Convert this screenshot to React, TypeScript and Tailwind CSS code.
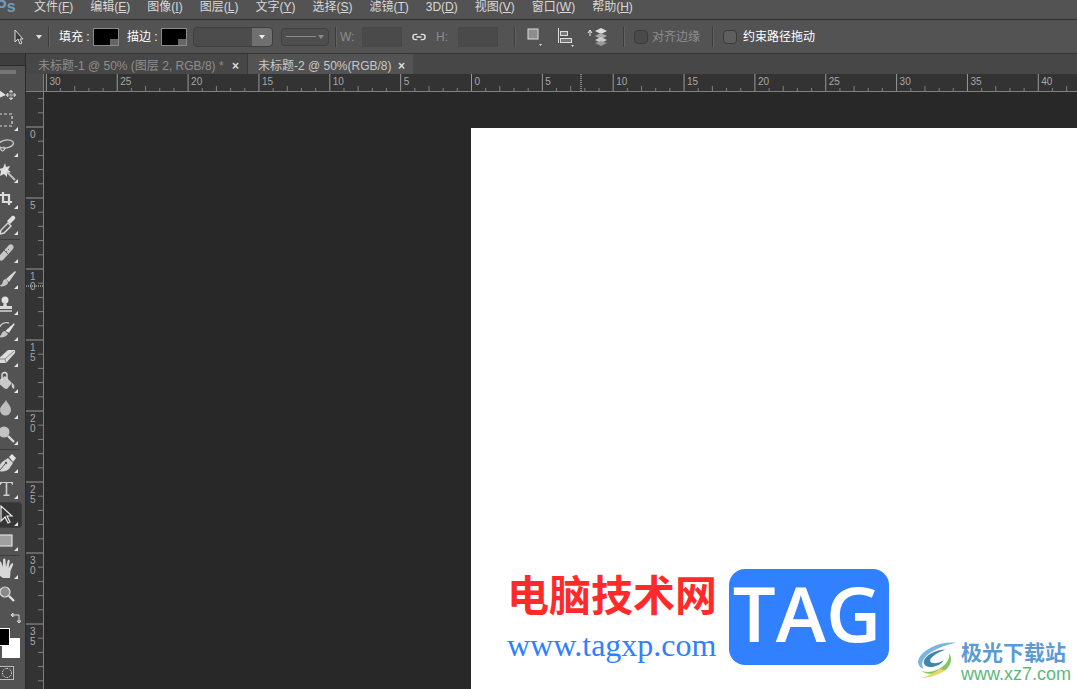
import { ReactNode } from "react";

const menus = [
  ["文件(", "F", ")"],
  ["编辑(", "E", ")"],
  ["图像(", "I", ")"],
  ["图层(", "L", ")"],
  ["文字(", "Y", ")"],
  ["选择(", "S", ")"],
  ["滤镜(", "T", ")"],
  ["3D(", "D", ")"],
  ["视图(", "V", ")"],
  ["窗口(", "W", ")"],
  ["帮助(", "H", ")"],
];

// tool icons, drawn on a 26x26 box and cut off at the left like the screenshot
const tools: { icon: ReactNode; fly?: boolean; active?: boolean }[][] = [
  [
    {
      icon: (
        <>
          <path d="M-1 8l7 5-7 3z" fill="#e0e0e0" />
          <path d="M11 9v8M7 13h8M11 8l-2 2h4zM11 18l-2-2h4zM6 13l2-2v4zM16 13l-2-2v4z" stroke="#c8c8c8" fill="#c8c8c8" strokeWidth="0.7" />
        </>
      ),
    },
    { icon: <rect x="-1" y="6" width="13" height="12" fill="none" stroke="#d8d8d8" strokeWidth="1.2" strokeDasharray="3 2" />, fly: true },
    {
      icon: (
        <>
          <ellipse cx="6" cy="10" rx="7.500" ry="4" fill="none" stroke="#c8c8c8" strokeWidth="1.3" transform="rotate(-10 6 10)" />
          <path d="M1 13c-1 3 1 5 3 3s1-3-1-3" fill="none" stroke="#c8c8c8" strokeWidth="1.1" />
        </>
      ),
      fly: true,
    },
    {
      icon: (
        <>
          <path d="M5 3l1 4 4-1-2 4 3 2-4 1 0 4-3-3-4 2 1-5-2-2 4-1z" fill="#e0e0e0" />
          <path d="M7 12l8 8" stroke="#c0c0c0" strokeWidth="2" />
        </>
      ),
      fly: true,
    },
    { icon: <path d="M3 6v10h9M0 9h9v10" fill="none" stroke="#dcdcdc" strokeWidth="2.200" />, fly: true },
    {
      icon: (
        <>
          <path d="M0 22l1-4 7-7 3 3-7 7z" fill="none" stroke="#d8d8d8" strokeWidth="1.4" />
          <path d="M7 9l5-5c2-1 4 1 3 3l-5 5z" fill="#e0e0e0" />
        </>
      ),
      fly: true,
    },
  ],
  [
    {
      icon: (
        <>
          <path d="M-1 16L9 5c2-2 6 1 4 4L3 20c-2 2-6-1-4-4z" fill="#c8c8c8" />
          <path d="M4 10l5 5M6 11l1 1M8 9l1 1" stroke="#6a6a6a" strokeWidth="1" />
        </>
      ),
      fly: true,
    },
    {
      icon: (
        <>
          <path d="M6 13L15 5l1 1-7 10z" fill="#d8d8d8" />
          <path d="M6 13c-3 0-3 3-4 5-1 1-3 2-4 2 4 1 9 0 10-3 0-2-1-3-2-4z" fill="#c4c4c4" />
        </>
      ),
      fly: true,
    },
    {
      icon: (
        <>
          <circle cx="5" cy="8" r="3.500" fill="#e0e0e0" />
          <path d="M4 10h2l1 4h5v3H-2v-3h5z" fill="#d8d8d8" />
          <path d="M-2 19h14" stroke="#e0e0e0" strokeWidth="1.4" />
        </>
      ),
      fly: true,
    },
    {
      icon: (
        <>
          <path d="M5 13L14 5l1 1-6 9z" fill="#e8e8e8" stroke="#333" strokeWidth="0.6" strokeDasharray="1 1" />
          <path d="M5 13c-3 0-3 3-5 5l-2 1c4 1 8 0 10-3z" fill="#c4c4c4" />
          <path d="M-1 10C1 6 5 4 9 5" stroke="#c8c8c8" fill="none" strokeWidth="1.4" />
        </>
      ),
      fly: true,
    },
    {
      icon: (
        <>
          <path d="M-2 15L8 6h7v3L6 19H-2z" fill="#dcdcdc" />
          <path d="M-2 15h7l1 4M5 15l9-8" stroke="#8a8a8a" fill="none" strokeWidth="1" />
        </>
      ),
      fly: true,
    },
    {
      icon: (
        <>
          <path d="M-2 11l7-5 7 7-5 6c-2 1-8-5-9-8z" fill="#c8c8c8" />
          <path d="M2 10V5a2.500 2.500 0 015 0v5" fill="none" stroke="#e0e0e0" strokeWidth="1.4" />
          <path d="M12 13c2 1 3 3 2 6-2-1-3-3-2-6z" fill="#d0d0d0" />
        </>
      ),
      fly: true,
    },
    { icon: <path d="M6 4c2 4 5 6 5 10a5.500 5.500 0 01-11 0c0-4 4-6 6-10z" fill="#bdbdbd" />, fly: true },
    {
      icon: (
        <>
          <circle cx="4" cy="10" r="5.500" fill="#c4c4c4" />
          <path d="M8 14l6 6" stroke="#d8d8d8" strokeWidth="2.400" />
        </>
      ),
      fly: true,
    },
  ],
  [
    {
      icon: (
        <>
          <path d="M-1 21c0-4 1-7 3-9l6-4 5 5-4 6c-2 2-6 3-10 2z" fill="#d4d4d4" />
          <path d="M9 7l3-3 4 4-3 4z" fill="#e4e4e4" />
          <path d="M0 20l5-6" stroke="#555" strokeWidth="1" />
          <circle cx="6" cy="13" r="1.200" fill="#555" />
        </>
      ),
      fly: true,
    },
    {
      icon: <path d="M0 6h13v3h-.8c0-1-.5-2-1.700-2H7.300v11.500H9.500V20H3.500v-1.500h2.200V7H2.500C1.300 7 .8 8 .8 9H0z" fill="#cfcfcf" />,
      fly: true,
    },
    {
      icon: <path d="M1 3v15l4-4 3 6 2-1-3-6h5z" fill="none" stroke="#e8e8e8" strokeWidth="1.2" />,
      fly: true,
      active: true,
    },
    {
      icon: <rect x="-1" y="7" width="13" height="11" fill="#a0a0a0" stroke="#e0e0e0" strokeWidth="1.2" />,
      fly: true,
    },
  ],
  [
    {
      icon: (
        <path d="M3 22c-3-1-5-5-7-8-1-2 1-3 3-1l1 1-1-7c0-2 2-2 2.500 0L3 11 3 4c0-2 2.500-2 2.500 0l.5 7 1.500-6c.5-2 2.500-1.500 2.200.5L8.500 12l2.500-4c1-1.500 2.800-.5 2 1l-2.500 6-.5 7z" fill="#d8d8d8" />
      ),
      fly: true,
    },
    {
      icon: (
        <>
          <circle cx="5" cy="10" r="5" fill="#8a8a8a" stroke="#dcdcdc" strokeWidth="1.2" />
          <path d="M9 14l5 5" stroke="#e0e0e0" strokeWidth="2.400" />
        </>
      ),
    },
  ],
];

const Tool = ({ icon, fly, active }: { icon: ReactNode; fly?: boolean; active?: boolean }) => (
  <div className={`relative h-6.5 w-5.5 shrink-0 ${active ? "rounded-r-sm border-y border-r border-[#3e3e3e] bg-[#363636]" : ""}`}>
    <svg viewBox="0 0 26 26" className="size-6.5 overflow-hidden">
      {icon}
      {fly && <path d="M14 23h4v-4z" fill="#e8e8e8" />}
    </svg>
  </div>
);

const Separator = () => <div className="h-5 w-px bg-[#3c3c3c] shadow-[1px_0_0_#636363]" />;

const Swatch = () => (
  <div className="relative h-4.5 w-6.5 border border-[#8a8a8a] bg-black">
    <div className="absolute right-0 bottom-0 h-1.5 w-2 bg-[#666]" />
  </div>
);

const Checkbox = ({ dim }: { dim?: boolean }) => (
  <div className={`size-3.5 rounded-sm border border-[#3a3a3a] ${dim ? "bg-[#4a4a4a]" : "bg-[#5e5e5e]"}`} />
);

const HorizontalRuler = () => {
  const zero = 427.5;
  const step = 70.85 / 5;
  const ticks = [];
  for (let i = -32; i <= 46; i++) {
    const x = zero + i * step;
    const major = i % 5 === 0;
    ticks.push(
      <line key={i} x1={x} x2={x} y1={major ? 0 : i % 5 === 2 || i % 5 === -3 ? 12 : 14} y2={18} stroke={major ? "#999" : "#808080"} />
    );
    if (major && i >= -30) {
      ticks.push(
        <text key={`t${i}`} x={x + 3} y={11} fontSize="10" fill="#a8a8a8">
          {Math.abs(i)}
        </text>
      );
    }
  }
  return (
    <svg className="h-4.5 flex-1">
      {ticks}
      <line x1="0" x2="1040" y1="17.500" y2="17.500" stroke="#808080" />
      <line x1="537" x2="537" y1="0" y2="18" stroke="#ddd" strokeDasharray="1 1" />
    </svg>
  );
};

const VerticalRuler = () => {
  const zero = 35;
  const step = 71 / 5;
  const ticks = [];
  for (let i = -2; i <= 42; i++) {
    const y = zero + i * step;
    const major = i % 5 === 0;
    ticks.push(<line key={i} x1={major ? 0 : 12} x2={17} y1={y} y2={y} stroke={major ? "#999" : "#808080"} />);
    if (major && i >= 0) {
      String(i)
        .split("")
        .forEach((d, k) =>
          ticks.push(
            <text key={`t${i}${k}`} x={4} y={y + 11 + k * 10} fontSize="10" fill="#a8a8a8">
              {d}
            </text>
          )
        );
    }
  }
  return (
    <svg className="h-full w-4.5 shrink-0">
      {ticks}
      <line x1="17.500" x2="17.500" y1="0" y2="600" stroke="#808080" />
      <line x1="0" x2="18" y1="194" y2="194" stroke="#ddd" strokeDasharray="1 1" />
    </svg>
  );
};

const Swirl = () => (
  <svg viewBox="0 0 42 40" className="-mt-0.5 size-10 shrink-0">
    <path d="M41 2C28 0 12 6 4 15-1 21 1 28 7 29 3 24 7 16 16 11 23 7 32 4 41 2z" fill="#7cb4e0" />
    <path d="M30 9C20 9 8 15 7 22c0 4 5 6 10 5 6-1 10-4 11-7-4 3-9 4-12 3-3-1-3-4 1-7 3-3 8-5 13-7z" fill="#3f86ad" />
    <path d="M33 12c3 6-3 15-14 19-5 2-11 2-15 0 6 5 17 5 25 0 7-5 9-13 4-19z" fill="#86c660" />
    <path d="M29 31c-7 5-16 8-25 8 7-2 14-5 20-10z" fill="#ead76a" />
  </svg>
);

export default function App() {
  return (
    <div className="flex h-screen w-screen flex-col overflow-hidden bg-[#535353] font-['Liberation_Sans','Noto_Sans_CJK_SC',sans-serif] text-xs text-[#d8d8d8]">
      {/* menu bar */}
      <div className="flex h-5 shrink-0 items-start gap-4 border-b border-[#2f2f2f] bg-[#535353] pt-px leading-3">
        <span className="-ml-1 w-5.5 text-base leading-3 font-bold text-[#6f9cc4]">Ps</span>
        {menus.map(([a, b, c]) => (
          <span key={b} className="pr-px whitespace-nowrap">
            {a}
            <span className="underline">{b}</span>
            {c}
          </span>
        ))}
      </div>

      {/* options bar */}
      <div className="flex h-8.5 shrink-0 items-center border-b border-[#343434] bg-[#535353] pl-3.5">
        <svg viewBox="0 0 10 16" className="h-4 w-2.5">
          <path d="M1 1v12l3-3 2 5 2-1-2-4h3z" fill="#3c3c3c" stroke="#dcdcdc" />
        </svg>
        <svg viewBox="0 0 6 4" className="ml-3 h-1 w-1.5">
          <path d="M0 0h6L3 4z" fill="#e0e0e0" />
        </svg>
        <div className="ml-1.5">
          <Separator />
        </div>
        <span className="ml-2.5 w-8 whitespace-nowrap text-white">填充 :</span>
        <div className="ml-0.5">
          <Swatch />
        </div>
        <span className="ml-2 w-8 whitespace-nowrap text-white">描边 :</span>
        <div className="ml-0.5">
          <Swatch />
        </div>
        <div className="ml-1.5 flex h-5 w-20 rounded-sm border border-[#3f3f3f] bg-[#4c4c4c]">
          <div className="flex-1" />
          <div className="flex w-5 items-center justify-center rounded-r-sm bg-[#707070]">
            <svg viewBox="0 0 6 4" className="h-1 w-1.5">
              <path d="M0 0h6L3 4z" fill="#eee" />
            </svg>
          </div>
        </div>
        <div className="ml-2 flex h-4.5 w-12 items-center gap-0.5 rounded-sm border border-[#404040] bg-[#4e4e4e] px-1">
          <div className="h-px flex-1 bg-[#8a8a8a]" />
          <svg viewBox="0 0 6 4" className="h-1 w-1.5">
            <path d="M0 0h6L3 4z" fill="#8a8a8a" />
          </svg>
        </div>
        <div className="ml-1.5">
          <Separator />
        </div>
        <span className="ml-1 w-5.5 text-[#8d8d8d]">W:</span>
        <div className="h-5 w-10 border border-[#484848] bg-[#4a4a4a]" />
        <svg viewBox="0 0 16 10" className="ml-2.5 h-2.5 w-3.5">
          <path d="M6 2H4a3 3 0 000 6h2M10 2h2a3 3 0 010 6h-2M5 5h6" fill="none" stroke="#e0e0e0" strokeWidth="1.6" />
        </svg>
        <span className="ml-2.5 w-5.5 text-[#8d8d8d]">H:</span>
        <div className="h-5 w-10 border border-[#484848] bg-[#4a4a4a]" />
        <div className="ml-4">
          <Separator />
        </div>
        <svg viewBox="0 0 16 20" className="ml-3 h-5 w-4">
          <rect x="1" y="2" width="10" height="10" fill="#8c8c8c" stroke="#dcdcdc" />
          <path d="M12 17h3l-1.500 2z" fill="#ddd" />
        </svg>
        <svg viewBox="0 0 18 20" className="ml-3.5 h-5 w-4.5">
          <path d="M1.500 1v15" stroke="#ddd" />
          <rect x="3.500" y="4.500" width="7" height="4" fill="#777" stroke="#ddd" />
          <rect x="3.500" y="11.500" width="11" height="4" fill="#777" stroke="#ddd" />
          <path d="M14 18h3l-1.500 2z" fill="#ddd" />
        </svg>
        <svg viewBox="0 0 22 20" className="ml-3 h-5 w-5.5">
          <path d="M3 4v5M1 6l2-3 2 3" stroke="#eee" fill="none" />
          <path d="M14 1l6 3-6 3-6-3z" fill="#ddd" />
          <path d="M14 6l6 3-6 3-6-3z" fill="#aaa" />
          <path d="M14 10l6 3-6 3-6-3z" fill="#ccc" />
          <path d="M14 14l6 2-6 3-6-3z" fill="#999" />
        </svg>
        <div className="ml-3.5">
          <Separator />
        </div>
        <div className="ml-2.5">
          <Checkbox dim />
        </div>
        <span className="ml-1 text-[#8d8d8d]">对齐边缘</span>
        <div className="ml-3">
          <Separator />
        </div>
        <div className="ml-2.5">
          <Checkbox />
        </div>
        <span className="ml-1.5 text-white">约束路径拖动</span>
      </div>

      {/* everything below the options bar */}
      <div className="flex min-h-0 flex-1">
        {/* toolbar */}
        <div className="flex w-6.5 shrink-0 flex-col border-r border-[#2b2b2b]">
          <div className="h-3 shrink-0 border-b border-[#2b2b2b] bg-[#3e3e3e]" />
          <div className="flex flex-1 flex-col bg-[#535353]">
            <div className="flex h-4 shrink-0 items-start pt-1">
              <svg viewBox="0 0 16 4" className="h-1 w-4">
                <path d="M1 0v4M3 0v4M5 0v4M7 0v4M9 0v4M11 0v4M13 0v4M15 0v4" stroke="#9a9a9a" />
              </svg>
            </div>
            {tools.map((group, g) => (
              <div key={g}>
                {group.map((t, i) => (
                  <Tool key={i} {...t} />
                ))}
                {g < tools.length - 1 && <div className="h-0.5 w-5 border-b border-[#3c3c3c]" />}
              </div>
            ))}
            {/* colours */}
            <div className="relative mt-1 h-12 shrink-0">
              <svg viewBox="0 0 12 12" className="absolute top-0 left-2.5 size-3">
                <path d="M2 3h7v6M1 3l2-2v4zM9 11l-2-2h4z" fill="none" stroke="#ddd" />
              </svg>
              <div className="absolute top-6.5 left-0.5 h-5 w-4.5 bg-white" />
              <div className="absolute top-4 -left-2 size-4.5 border border-white bg-black" />
            </div>
            <div className="mt-1.5 flex size-3.5 items-center justify-center border-y border-r border-[#bbb] bg-[#484848]">
              <div className="size-2.5 rounded-full border border-dotted border-white" />
            </div>
          </div>
        </div>

        <div className="flex min-w-0 flex-1 flex-col">
          {/* document tabs */}
          <div className="flex h-5 shrink-0 bg-[#474747]">
            <div className="flex w-[222px] items-center justify-between border-r border-[#3a3a3a] pt-1 pr-2 pl-3 whitespace-nowrap text-[#8e8e8e]">
              <span>未标题-1 @ 50% (图层 2, RGB/8) *</span>
              <span className="font-bold text-[#ddd]">×</span>
            </div>
            <div className="flex w-[165px] items-center justify-between bg-[#535353] pt-1 pr-2 pl-2.5 whitespace-nowrap text-[#c8c8c8]">
              <span>未标题-2 @ 50%(RGB/8)</span>
              <span className="font-bold text-[#ddd]">×</span>
            </div>
          </div>

          {/* ruler strip */}
          <div className="flex h-4.5 shrink-0 bg-[#333333]">
            <div className="w-4.5 shrink-0 border-r border-b border-[#808080] bg-[#4a4a4a]" />
            <HorizontalRuler />
          </div>

          <div className="flex min-h-0 flex-1">
            <div className="bg-[#333333]">
              <VerticalRuler />
            </div>
            {/* canvas */}
            <div className="flex min-w-0 flex-1 bg-[#282828] pt-9 pl-[427px]">
              <div className="flex flex-1 items-end bg-white">
                <div className="mb-7 ml-9 flex flex-col items-start gap-3 pr-3">
                  <span className="text-[42px] leading-10 font-bold whitespace-nowrap text-[#ff2b2b]">电脑技术网</span>
                  <span className="font-['Liberation_Serif',serif] text-[32px] leading-8 whitespace-nowrap text-[#2f80ff]">www.tagxp.com</span>
                </div>
                <div className="mb-6 flex h-24 w-40 shrink-0 items-center justify-center rounded-2xl bg-[#3080ff] pr-1 pb-2 font-['Open_Sans',sans-serif] text-[76px] font-semibold text-white">
                  TAG
                </div>
                <div className="mb-1.5 ml-7 flex items-start">
                  <Swirl />
                  <div className="ml-1 flex flex-col">
                    <span className="text-[21px] leading-none font-bold whitespace-nowrap text-[#5b9bd5]">极光下载站</span>
                    <span className="mt-0.5 text-lg leading-none whitespace-nowrap text-[#5cb87a]">www.xz7.com</span>
                  </div>
                </div>
              </div>
            </div>
          </div>
        </div>
      </div>
    </div>
  );
}
